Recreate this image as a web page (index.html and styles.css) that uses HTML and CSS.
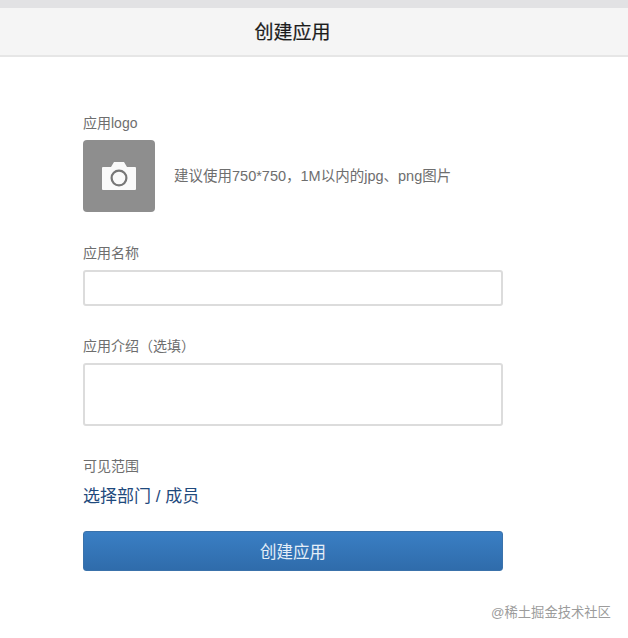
FILE: index.html
```html
<!DOCTYPE html>
<html lang="zh">
<head>
<meta charset="utf-8">
<title>创建应用</title>
<link rel="stylesheet" href="styles.css">
</head>
<body>
<div class="topstrip"></div>
<header class="navbar"><h1 class="nav-title">创建应用</h1></header>
<main class="form">
  <div class="label label-logo">应用logo</div>
  <div class="logo-row">
    <div class="logo-box">
      <svg width="36" height="30" viewBox="0 0 36 30">
        <path d="M2 6h8l3-5h10l3 5h8a1 1 0 0 1 1 1v21a1 1 0 0 1-1 1H2a1 1 0 0 1-1-1V7a1 1 0 0 1 1-1z" fill="#fafafa"/>
        <circle cx="18" cy="17" r="7.4" fill="none" stroke="#777" stroke-width="2.2"/>
      </svg>
    </div>
    <div class="hint">建议使用750*750，1M以内的jpg、png图片</div>
  </div>
  <div class="label label-name">应用名称</div>
  <div class="input input-name"></div>
  <div class="label label-intro">应用介绍（选填）</div>
  <div class="input input-intro"></div>
  <div class="label label-scope">可见范围</div>
  <div class="scope-link">选择部门 / 成员</div>
  <div class="submit">创建应用</div>
</main>
<footer class="watermark">@稀土掘金技术社区</footer>
</body>
</html>
```
FILE: styles.css
```css
* { box-sizing: border-box; }
html, body { margin: 0; padding: 0; }
body {
  width: 628px;
  height: 638px;
  overflow: hidden;
  background: #fff;
  font-family: "Liberation Sans", "Noto Sans CJK SC", sans-serif;
  color: #666;
  position: relative;
}
.topstrip { height: 8px; background: #e2e2e4; }
.navbar {
  height: 49px;
  background: #f5f5f5;
  border-bottom: 2px solid #e6e6e6;
  display: flex;
  align-items: center;
  justify-content: center;
  padding-right: 43px;
}
.nav-title { margin: 0; font-size: 19px; font-weight: 400; color: #1c1c1c; line-height: 48px; padding-top: 2px; -webkit-text-stroke: 0.2px #1c1c1c; }
.form { width: 420px; margin-left: 83px; padding-top: 57px; display: flex; flex-direction: column; }
.label { font-size: 14px; line-height: 18px; color: #6e6e6e; }
.logo-row { display: flex; align-items: center; margin-top: 8px; }
.logo-box {
  width: 72px;
  height: 72px;
  background: #8e8e8e;
  border-radius: 4px;
  display: flex;
  align-items: center;
  justify-content: center;
}
.hint { margin-left: 19px; margin-top: 0; font-size: 14.5px; line-height: 18px; color: #6e6e6e; }
.label-name { margin-top: 32px; }
.input { background: #fff; border: 2px solid #dcdcdc; border-radius: 3px; }
.input-name { height: 36px; margin-top: 8px; }
.label-intro { margin-top: 31px; }
.input-intro { height: 63px; margin-top: 8px; }
.label-scope { margin-top: 31px; }
.scope-link { margin-top: 10px; font-size: 17px; line-height: 24px; color: #1f4a7d; }
.submit {
  margin-top: 22px;
  height: 40px;
  border-radius: 3px;
  background: linear-gradient(#3a7fc4, #2f6cab);
  border: 1px solid #3a72ab;
  color: #e4eef8;
  font-size: 16.5px;
  display: flex;
  align-items: center;
  justify-content: center;
}
.watermark { position: absolute; left: 491px; top: 604px; font-size: 13.3px; line-height: 18px; color: #9c9c9c; }
```
